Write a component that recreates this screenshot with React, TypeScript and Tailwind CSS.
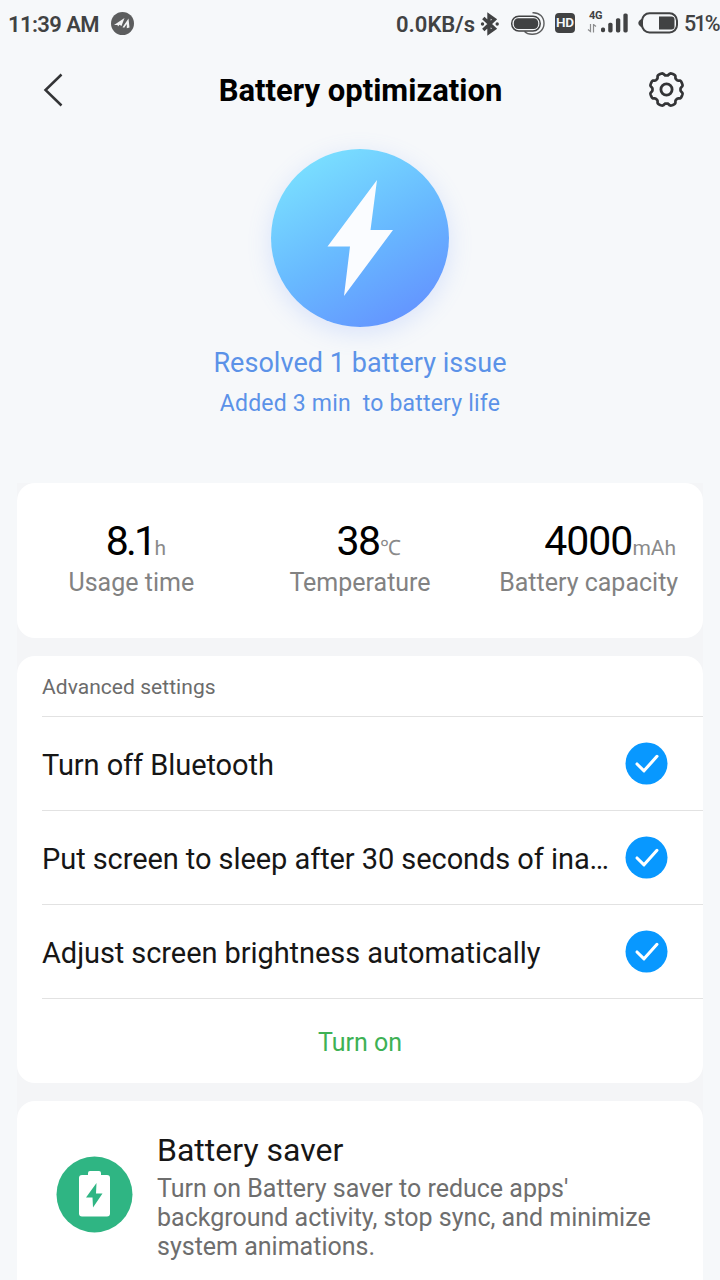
interface StatProps {
  value: string
  unit: string
  label: string
  valueClass: string
}

const settings = [
  'Turn off Bluetooth',
  'Put screen to sleep after 30 seconds of ina…',
  'Adjust screen brightness automatically',
]

// outline of the eight-toothed settings gear
const gearPoints = Array.from({ length: 128 }, (_, i) => {
  const a = (i / 128) * Math.PI * 2
  const r = 15.3 - 1.4 * Math.tanh(2.2 * Math.cos(8 * a) - 0.6)
  return `${(18.5 + r * Math.cos(a)).toFixed(2)},${(17.5 + r * Math.sin(a)).toFixed(2)}`
}).join(' ')

const StatusBar = () => (
  <div className="flex h-[46px] items-center pt-px pl-[8px] text-[#414243]">
    <span className="w-[102px] whitespace-nowrap pt-[3px] text-[22px] font-semibold leading-none tracking-[-0.6px]">
      11:39 AM
    </span>
    <svg className="h-6 w-6 shrink-0" viewBox="0 0 24 24">
      <circle cx="12.5" cy="11.5" r="11.5" fill="#5c5d5e" />
      <path
        d="M4 13 14.5 6 11.5 14 9.500 12.700 8 14.500 7.500 13.100ZM12.500 15.300 18.500 6.500 19.500 15.500 16.800 16.300 16.800 12 14.200 15.800Z"
        fill="#f1f2f3"
      />
    </svg>
    <span className="ml-[262px] w-[84px] shrink-0 whitespace-nowrap pt-[3px] text-[22px] font-semibold leading-none">
      0.0KB/s
    </span>
    <svg className="h-6 w-5 shrink-0" viewBox="0 0 20 24" fill="none">
      <path
        d="M3.300 6 14.500 16.500 9 20.500V3.500L14.500 7.500 3.300 18"
        stroke="currentColor"
        strokeWidth="3.4"
      />
      <circle cx="2.500" cy="12" r="1.700" fill="currentColor" />
      <circle cx="17.200" cy="12" r="1.700" fill="currentColor" />
    </svg>
    <svg className="ml-[10px] h-6 w-9 shrink-0" viewBox="0 0 36 24" fill="none">
      <path
        d="M22.500 .8C29.500 .4 34 5 34 11.500S28.500 22.500 22 22.300C18.500 22.200 16 21 14.500 19.500"
        stroke="#5c5d5e"
        strokeWidth="1.4"
      />
      <rect x="1.700" y="4.200" width="28.500" height="14.800" rx="7.200" stroke="currentColor" strokeWidth="1.500" />
      <rect x="3.800" y="6.200" width="24.400" height="10.800" rx="4.500" fill="currentColor" />
    </svg>
    <span className="ml-[9px] -mt-[2px] flex h-5 w-5 shrink-0 items-center justify-center rounded-[4px] bg-[#414243] text-[13.500px] font-semibold leading-none tracking-[-0.2px] text-[#f6f8fa]">
      HD
    </span>
    <div className="ml-3 flex h-6 w-[41px] shrink-0 justify-between">
      <div className="flex flex-col">
        <span className="h-[12px] w-[14px] pl-[2px] text-[11px] font-bold leading-[7px] tracking-[-0.3px]">
          4G
        </span>
        <svg className="h-[10px] w-[10px]" viewBox="0 0 10 10" fill="none">
          <path d="M3.500 0V7.500L1 5.500M6.500 8.500V.5L9 2.500" stroke="#8b8c8d" strokeWidth="1.200" />
        </svg>
      </div>
      <svg className="h-6 w-[28px]" viewBox="0 0 28 24">
        <g fill="currentColor">
          <rect x="0" y="15.500" width="4.200" height="5" rx="1.700" />
          <rect x="7.500" y="10.800" width="4.500" height="10" rx="1.700" />
          <rect x="15.500" y="6" width="4.500" height="14.800" rx="1.700" />
          <rect x="23.200" y="1" width="4.500" height="19.800" rx="1.700" />
        </g>
      </svg>
    </div>
    <svg className="ml-[10px] h-6 w-10 shrink-0" viewBox="0 0 40 24" fill="none">
      <path d="M4 6.500C1.500 8 .3 9.500 .3 11S1.500 14 4 15.500Z" fill="currentColor" />
      <rect x="4" y="1.300" width="35" height="19.200" rx="7.500" stroke="currentColor" strokeWidth="2" />
      <path d="M21 4.500h12.500a3 3 0 0 1 3 3v6.900a3 3 0 0 1-3 3H21Z" fill="currentColor" />
    </svg>
    <span className="ml-[6px] whitespace-nowrap text-[21.500px] font-medium leading-none tracking-[-1.900px]">
      51%
    </span>
  </div>
)

const Header = () => (
  <header className="flex h-[88px] items-center justify-between pr-[36px] pl-[42px]">
    <svg className="h-9 w-9" viewBox="0 0 36 36" fill="none">
      <path d="M19.500 2.500 3.500 18 19.500 33.500" stroke="#333436" strokeWidth="2.500" />
    </svg>
    <h1 className="mr-[5px] text-[31px] font-bold leading-none text-black">
      Battery optimization
    </h1>
    <svg className="h-9 w-9 overflow-visible" viewBox="0 0 36 36" fill="none" stroke="#333436">
      <polygon points={gearPoints} strokeWidth="2.700" strokeLinejoin="round" />
      <circle cx="18.500" cy="17.500" r="5.600" strokeWidth="2.800" />
    </svg>
  </header>
)

const Stat: React.FC<StatProps> = ({ value, unit, label, valueClass }) => (
  <div className="flex flex-col items-center whitespace-nowrap">
    <div className={`flex h-[42px] items-baseline leading-[42px] ${valueClass}`}>
      <span className="text-[41px] text-black">{value}</span>
      <span className="text-[21px] tracking-normal text-[#8a8a8a]">{unit}</span>
    </div>
    <span className="mt-[6px] text-[25px] leading-[30px] text-[#828282]">{label}</span>
  </div>
)

const Card = ({ children, className }: { children: React.ReactNode; className: string }) => (
  <section className={`rounded-[18px] bg-white ${className}`}>{children}</section>
)

const Check = () => (
  <svg className="h-[43px] w-[43px] shrink-0" viewBox="0 0 43 43" fill="none">
    <circle cx="21.500" cy="21.500" r="21" fill="#0898ff" />
    <path
      d="M12 22 19 28.800 32 14.300"
      stroke="#fff"
      strokeWidth="3.100"
      strokeLinecap="round"
      strokeLinejoin="round"
    />
  </svg>
)

export default function App() {
  return (
    <main className="h-[1280px] w-[720px] overflow-hidden bg-[#f6f8fa] font-[Roboto,sans-serif]">
      <StatusBar />
      <Header />

      <section className="flex h-[349px] flex-col items-center pt-[15px] text-[#5b92e8]">
        <div className="flex h-[178px] w-[178px] items-center justify-center rounded-full bg-[linear-gradient(150deg,#7be2ff_8%,#68b9ff_52%,#6391ff_92%)] shadow-[0_6px_24px_rgba(100,145,255,0.2)]">
          <svg className="h-[178px] w-[178px]" viewBox="0 0 178 178">
            <path d="M106 31 56.500 97.500H79L73 147 122 81H99.500Z" fill="#fafcff" />
          </svg>
        </div>
        <p className="mt-[19px] text-[27px] leading-[34px] tracking-[0.04px]">
          Resolved 1 battery issue
        </p>
        <p className="mt-[9px] whitespace-pre text-[23px] leading-[30px] tracking-[0.2px]">
          Added 3 min  to battery life
        </p>
      </section>

      <div className="mx-[17px] flex flex-col gap-[18px] bg-[#f4f5f7]">
        <Card className="grid h-[155px] grid-cols-3 pt-[37px]">
          <Stat value="8.1" unit="h" label="Usage time" valueClass="pl-[9px] tracking-[-2.7px]" />
          <Stat value="38" unit="℃" label="Temperature" valueClass="pl-[17px] tracking-[-1.5px]" />
          <Stat value="4000" unit="mAh" label="Battery capacity" valueClass="pl-[43px] tracking-[-1px]" />
        </Card>

        <Card className="h-[427px] pl-[25px]">
          <h2 className="h-[60px] text-[21px] leading-[62px] tracking-[0.05px] text-[#6b6b6b]">
            Advanced settings
          </h2>
          {settings.map((label) => (
            <div
              key={label}
              className="flex h-[94px] items-center justify-between border-t border-[#e2e2e2] pr-[35px]"
            >
              <span className="whitespace-nowrap pt-[2px] text-[29px] leading-[40px] tracking-[-0.07px] text-[#161616]">
                {label}
              </span>
              <Check />
            </div>
          ))}
          <div className="border-t border-[#e2e2e2] pr-[25px] text-center text-[25px] leading-[87px] text-[#3eb155]">
            Turn on
          </div>
        </Card>

        <Card className="flex h-[200px] pl-[39px]">
          <svg className="mt-[55px] h-[77px] w-[77px] shrink-0" viewBox="0 0 77 77">
            <circle cx="38.500" cy="38.500" r="38" fill="#2fb583" />
            <path
              d="M32 19V17a2 2 0 0 1 2-2h9a2 2 0 0 1 2 2V19H51a3 3 0 0 1 3 3V57.500a3 3 0 0 1-3 3H26a3 3 0 0 1-3-3V22a3 3 0 0 1 3-3Z"
              fill="#fff"
            />
            <path d="M40.500 27 30 41.500h6.500L37 51.500 46.500 37.500H40Z" fill="#2fb583" />
          </svg>
          <div className="ml-[24px] pt-[29px]">
            <h2 className="text-[32px] leading-[40px] text-[#161616]">Battery saver</h2>
            <p className="mt-[4px] whitespace-nowrap text-[25px] leading-[29px] text-[#6e6e6e]">
              Turn on Battery saver to reduce apps'
              <br />
              background activity, stop sync, and minimize
              <br />
              system animations.
            </p>
          </div>
        </Card>
      </div>
    </main>
  )
}
